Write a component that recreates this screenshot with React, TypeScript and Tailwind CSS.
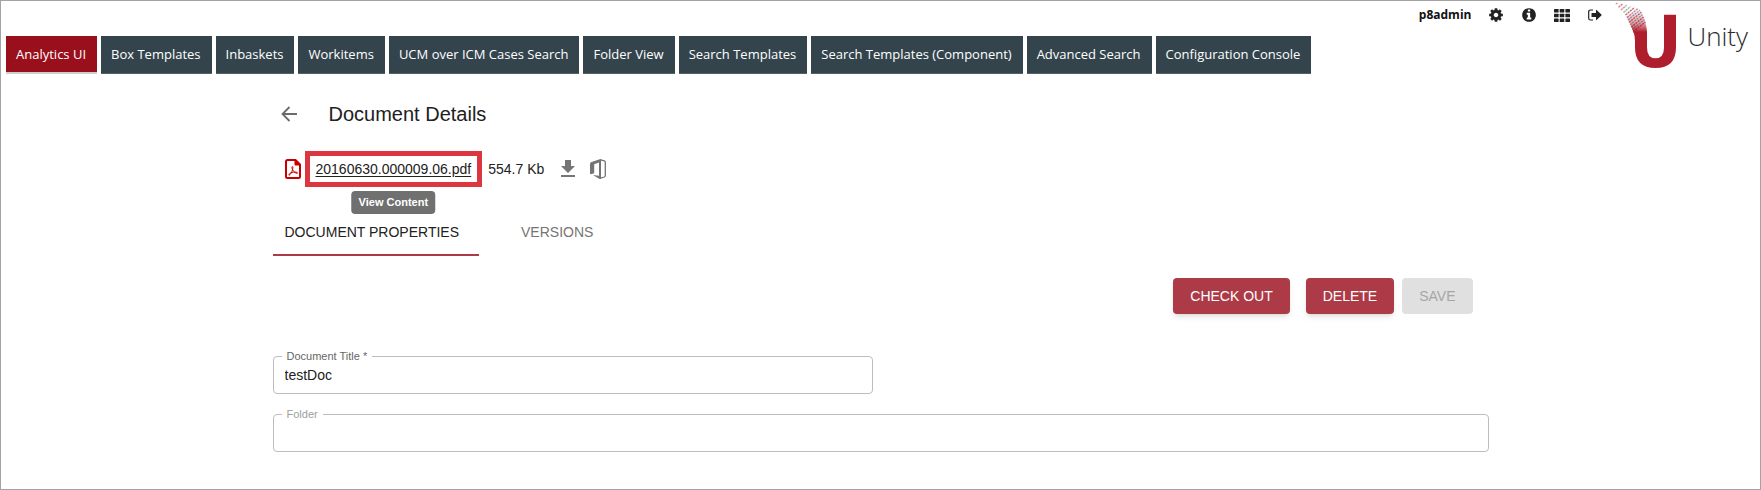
import { useState } from "react";
import type { ReactNode } from "react";

const NAV = [
  "Analytics UI",
  "Box Templates",
  "Inbaskets",
  "Workitems",
  "UCM over ICM Cases Search",
  "Folder View",
  "Search Templates",
  "Search Templates (Component)",
  "Advanced Search",
  "Configuration Console",
];

const COG =
  "M1152 896q0-106-75-181t-181-75-181 75-75 181 75 181 181 75 181-75 75-181zm512-109v222q0 12-8 23t-20 13l-185 28q-19 54-39 91 35 50 107 138 10 12 10 25t-9 23q-27 37-99 108t-94 71q-12 0-26-9l-138-108q-44 23-91 38-16 136-29 186-7 28-36 28h-222q-14 0-24.5-8.5t-11.5-21.5l-28-184q-49-16-90-37l-141 107q-10 9-25 9-14 0-25-11-126-114-165-168-7-10-7-23 0-12 8-23 15-21 51-66.5t54-70.5q-27-50-41-99l-183-27q-13-2-21-12.5t-8-23.5v-222q0-12 8-23t19-13l186-28q14-46 39-92-40-57-107-138-10-12-10-24 0-10 9-23 26-36 98.5-107.5t94.5-71.5q13 0 26 10l138 107q44-23 91-38 16-136 29-186 7-28 36-28h222q14 0 24.5 8.5t11.5 21.5l28 184q49 16 90 37l142-107q9-9 24-9 13 0 25 10 129 119 165 170 7 8 7 22 0 12-8 23-15 21-51 66.5t-54 70.5q26 50 41 98l183 28q13 2 21 12.5t8 23.5z";
const INFO =
  "M1152 1376v-160q0-14-9-23t-23-9h-96v-512q0-14-9-23t-23-9h-320q-14 0-23 9t-9 23v160q0 14 9 23t23 9h96v320h-96q-14 0-23 9t-9 23v160q0 14 9 23t23 9h448q14 0 23-9t9-23zm-128-896v-160q0-14-9-23t-23-9h-192q-14 0-23 9t-9 23v160q0 14 9 23t23 9h192q14 0 23-9t9-23zm640 416q0 209-103 385.5t-279.5 279.5-385.5 103-385.5-103-279.5-279.5-103-385.5 103-385.5 279.5-279.5 385.5-103 385.5 103 279.5 279.5 103 385.5z";

function IconButton({ label, children }: { label: string; children: ReactNode }) {
  return (
    <button type="button" aria-label={label} className="flex h-4 w-4 items-center justify-center text-[#222]">
      {children}
    </button>
  );
}

const STRIPS = [
  { d: "M2.800 3.200L5 1.400", c: "#e59aa2" },
  { d: "M5.500 6.200L9.500 3", c: "#d77680" },
  { d: "M8 9L13.500 4.300", c: "#dd8a92" },
  { d: "M10.500 11.500L17.500 5.500", c: "#86bfae" },
  { d: "M12.500 14L21.500 6.500", c: "#d4636f" },
  { d: "M14 16.500L25 7.500", c: "#d9808a" },
  { d: "M15 19L27 9", c: "#7db3d0" },
  { d: "M16 21.500L28.500 11", c: "#d4636f" },
  { d: "M17 24L29.500 13.500", c: "#8dbb9a" },
  { d: "M18 26.300L30.500 16", c: "#cf5563" },
  { d: "M19 28.500L31.500 18.500", c: "#7fa6c8" },
  { d: "M20 30.500L32.500 21", c: "#c94a59" },
];

function UnityLogo() {
  return (
    <svg width="66" height="70" viewBox="0 0 66 70" aria-hidden="true">
      <defs>
        <linearGradient id="stem" x1="0" y1="9" x2="0" y2="31" gradientUnits="userSpaceOnUse">
          <stop offset="0" stopColor="#ae1e2d" stopOpacity="0" />
          <stop offset="0.600" stopColor="#ae1e2d" stopOpacity="0.400" />
          <stop offset="1" stopColor="#ae1e2d" />
        </linearGradient>
      </defs>
      {STRIPS.map((s) => (
        <path key={s.d} d={s.d} stroke={s.c} strokeWidth="1.400" strokeDasharray="2.200 0.700" fill="none" />
      ))}
      <path d="M13 15.500L27.500 8.500Q31.500 17 33 24Q33.800 28 34 31V32H20.800Q18.500 24 13 15.500Z" fill="url(#stem)" />
      <path
        d="M20.500 31H34V46.500Q34 57.300 42.500 57.300Q51 57.300 51 46.500V13.700H63V46.500Q63 67 42.500 67Q22 67 22 46.500V40Q22 35 20.500 31Z"
        fill="#ae1e2d"
      />
    </svg>
  );
}

function PdfIcon() {
  return (
    <svg width="16" height="20" viewBox="0 0 16 20" fill="none" stroke="#c80000" aria-hidden="true">
      <path d="M2.500 1H10.500L15 5.500V17.500Q15 19 13.500 19H2.500Q1 19 1 17.500V2.500Q1 1 2.500 1Z" strokeWidth="2" />
      <path d="M10 1V6H15Z" fill="#c80000" strokeWidth="1" />
      <path
        d="M7.300 7.500C6.600 7.500 6.900 9.300 7.600 10.800C8.600 12.900 10.800 14.400 12.200 14.300C13.300 14.100 12.300 13 10.300 13C7.800 13 5.300 13.800 4.300 14.900C3.400 16 4 16.700 5 15.700C6.300 14.300 7.900 10.500 7.900 8.600C7.900 7.900 7.700 7.500 7.300 7.500Z"
        strokeWidth="1"
      />
    </svg>
  );
}

function OfficeIcon() {
  return (
    <svg width="16" height="20" viewBox="0 0 16 20" aria-hidden="true">
      <path d="M10.500 0L1.500 3Q0 3.600 0 5V14.300Q0 15.300 1 15.300L4.200 14.200V5.200L9 3.600V16.800L3 16L9.500 20H11V0Z" fill="#757575" />
      <path d="M10.500 0.800L14.300 1.900Q15.300 2.300 15.300 3.300V16.600Q15.300 17.600 14.300 18L10.500 19.200" fill="none" stroke="#757575" strokeWidth="1.300" />
    </svg>
  );
}

function OutlinedField({
  id,
  label,
  defaultValue,
  muted,
  className,
}: {
  id: string;
  label: string;
  defaultValue?: string;
  muted?: boolean;
  className: string;
}) {
  return (
    <fieldset className={`rounded border border-[#bdbdbd] ${className}`}>
      <legend className="ml-2 h-4 px-[5px] text-[11px] leading-4">
        <label htmlFor={id} className={muted ? "text-[#9e9e9e]" : "text-[#666]"}>
          {label}
        </label>
      </legend>
      <input
        id={id}
        defaultValue={defaultValue}
        className="block h-[29px] w-full bg-transparent px-[11px] pb-2 text-sm text-[#212121] outline-none"
      />
    </fieldset>
  );
}

export default function App() {
  const [nav, setNav] = useState(NAV[0]);
  return (
    <div className="min-h-screen border border-[#a3a3a3] bg-white font-['Liberation_Sans',Arial,sans-serif]">
      <header className="flex items-start justify-between pl-[5px] pr-3 font-['Open_Sans',sans-serif]">
        <nav className="mt-[35px] flex gap-1">
          {NAV.map((item) => (
            <button
              key={item}
              type="button"
              onClick={() => setNav(item)}
              className={`h-[38px] pr-[11px] pl-[10px] text-[13px] whitespace-nowrap text-white ${
                item === nav ? "border-b-2 border-[#cfcfcf] bg-[#990f1c] pt-px" : "border-b border-[#5a5f62] bg-[#34444c]"
              }`}
            >
              {item}
            </button>
          ))}
        </nav>
        <div className="flex items-start">
          <div className="flex h-7 items-center gap-[17px] pr-[10px]">
            <span className="text-xs font-bold text-[#111]">p8admin</span>
            <IconButton label="Settings">
              <svg width="16" height="16" viewBox="0 0 1792 1792" fill="currentColor">
                <path d={COG} />
              </svg>
            </IconButton>
            <IconButton label="Information">
              <svg width="16" height="16" viewBox="0 0 1792 1792" fill="currentColor">
                <path d={INFO} />
              </svg>
            </IconButton>
            <IconButton label="Applications">
              <svg width="16" height="13" viewBox="0 0 16 13" fill="currentColor">
                {[0, 4.7, 9.4].map((y) =>
                  [0, 5.7, 11.4].map((x) => (
                    <rect key={`${x}-${y}`} x={x} y={y} width="4.600" height="3.600" rx="0.500" />
                  )),
                )}
              </svg>
            </IconButton>
            <IconButton label="Sign out">
              <svg width="14" height="12" viewBox="0 0 14 12" fill="none">
                <path d="M5 1H2.500Q0.700 1 0.700 2.800V9.200Q0.700 11 2.500 11H5" stroke="currentColor" strokeWidth="1.200" />
                <path d="M4 4H8V1.200Q8 0.500 8.600 1L13.400 5.500Q13.900 6 13.400 6.500L8.600 11Q8 11.500 8 10.800V8H4Q3.500 8 3.500 7.500V4.500Q3.500 4 4 4Z" fill="currentColor" />
              </svg>
            </IconButton>
          </div>
          <a href="#home" className="flex items-start gap-2 text-[26px] font-light text-[#2b2b2b]">
            <UnityLogo />
            <span className="mt-[17px] leading-9">Unity</span>
          </a>
        </div>
      </header>

      <main className="mx-auto mt-6 w-full max-w-[1216px]">
        <div className="flex h-8 items-center gap-8">
          <button type="button" aria-label="Back" className="ml-2 flex h-4 w-4 items-center justify-center">
            <svg width="16" height="16" viewBox="0 0 16 16" fill="none" stroke="#6b6b6b" strokeWidth="1.800">
              <path d="M16 8H1.500M8.500 1L1.500 8L8.500 15" />
            </svg>
          </button>
          <h1 className="text-xl text-[#212121]">Document Details</h1>
        </div>

        <div className="mt-[21px] flex h-9 items-center pl-3 text-sm text-[#212121]">
          <PdfIcon />
          <div className="relative ml-1 flex h-9 items-center border-[5px] border-[#dc3740] px-[6px]">
            <a href="#content" aria-describedby="view-tip" className="underline underline-offset-2">
              20160630.000009.06.pdf
            </a>
            <span
              id="view-tip"
              role="tooltip"
              className="absolute top-full left-1/2 mt-[9px] flex h-[23px] -translate-x-1/2 items-center rounded bg-[#707070] px-[7px] text-[11px] font-bold whitespace-nowrap text-white"
            >
              View Content
            </span>
          </div>
          <span className="ml-[6px]">554.7 Kb</span>
          <button type="button" aria-label="Download" className="ml-3">
            <svg width="24" height="24" viewBox="0 0 24 24" fill="#757575">
              <path d="M19 9h-4V3H9v6H5l7 7 7-7zM5 18v2h14v-2H5z" />
            </svg>
          </button>
          <button type="button" aria-label="Open in Office" className="ml-[10px]">
            <OfficeIcon />
          </button>
        </div>

        <div role="tablist" className="mt-[21px] flex gap-[30px] text-sm">
          <button role="tab" aria-selected="true" type="button" className="h-12 border-b-2 border-[#ad3b47] pt-0.5 pr-5 pl-3 text-[#212121]">
            DOCUMENT PROPERTIES
          </button>
          <button role="tab" aria-selected="false" type="button" className="h-12 border-b-2 border-transparent pt-0.5 pr-5 pl-3 text-[#757575]">
            VERSIONS
          </button>
        </div>

        <div className="mt-[22px] flex justify-end pr-4 text-sm">
          <button type="button" className="mr-4 h-9 rounded bg-[#ad3b47] px-[17px] text-white shadow-md">
            CHECK OUT
          </button>
          <button type="button" className="mr-2 h-9 rounded bg-[#ad3b47] px-[17px] text-white shadow-md">
            DELETE
          </button>
          <button type="button" disabled className="h-9 rounded bg-[#e0e0e0] px-[17px] text-[#a6a6a6]">
            SAVE
          </button>
        </div>

        <form className="mt-[34px] flex flex-col gap-3">
          <OutlinedField id="doc-title" label="Document Title *" defaultValue="testDoc" className="w-full max-w-[600px]" />
          <OutlinedField id="folder" label="Folder" muted className="w-full" />
        </form>
      </main>
    </div>
  );
}
